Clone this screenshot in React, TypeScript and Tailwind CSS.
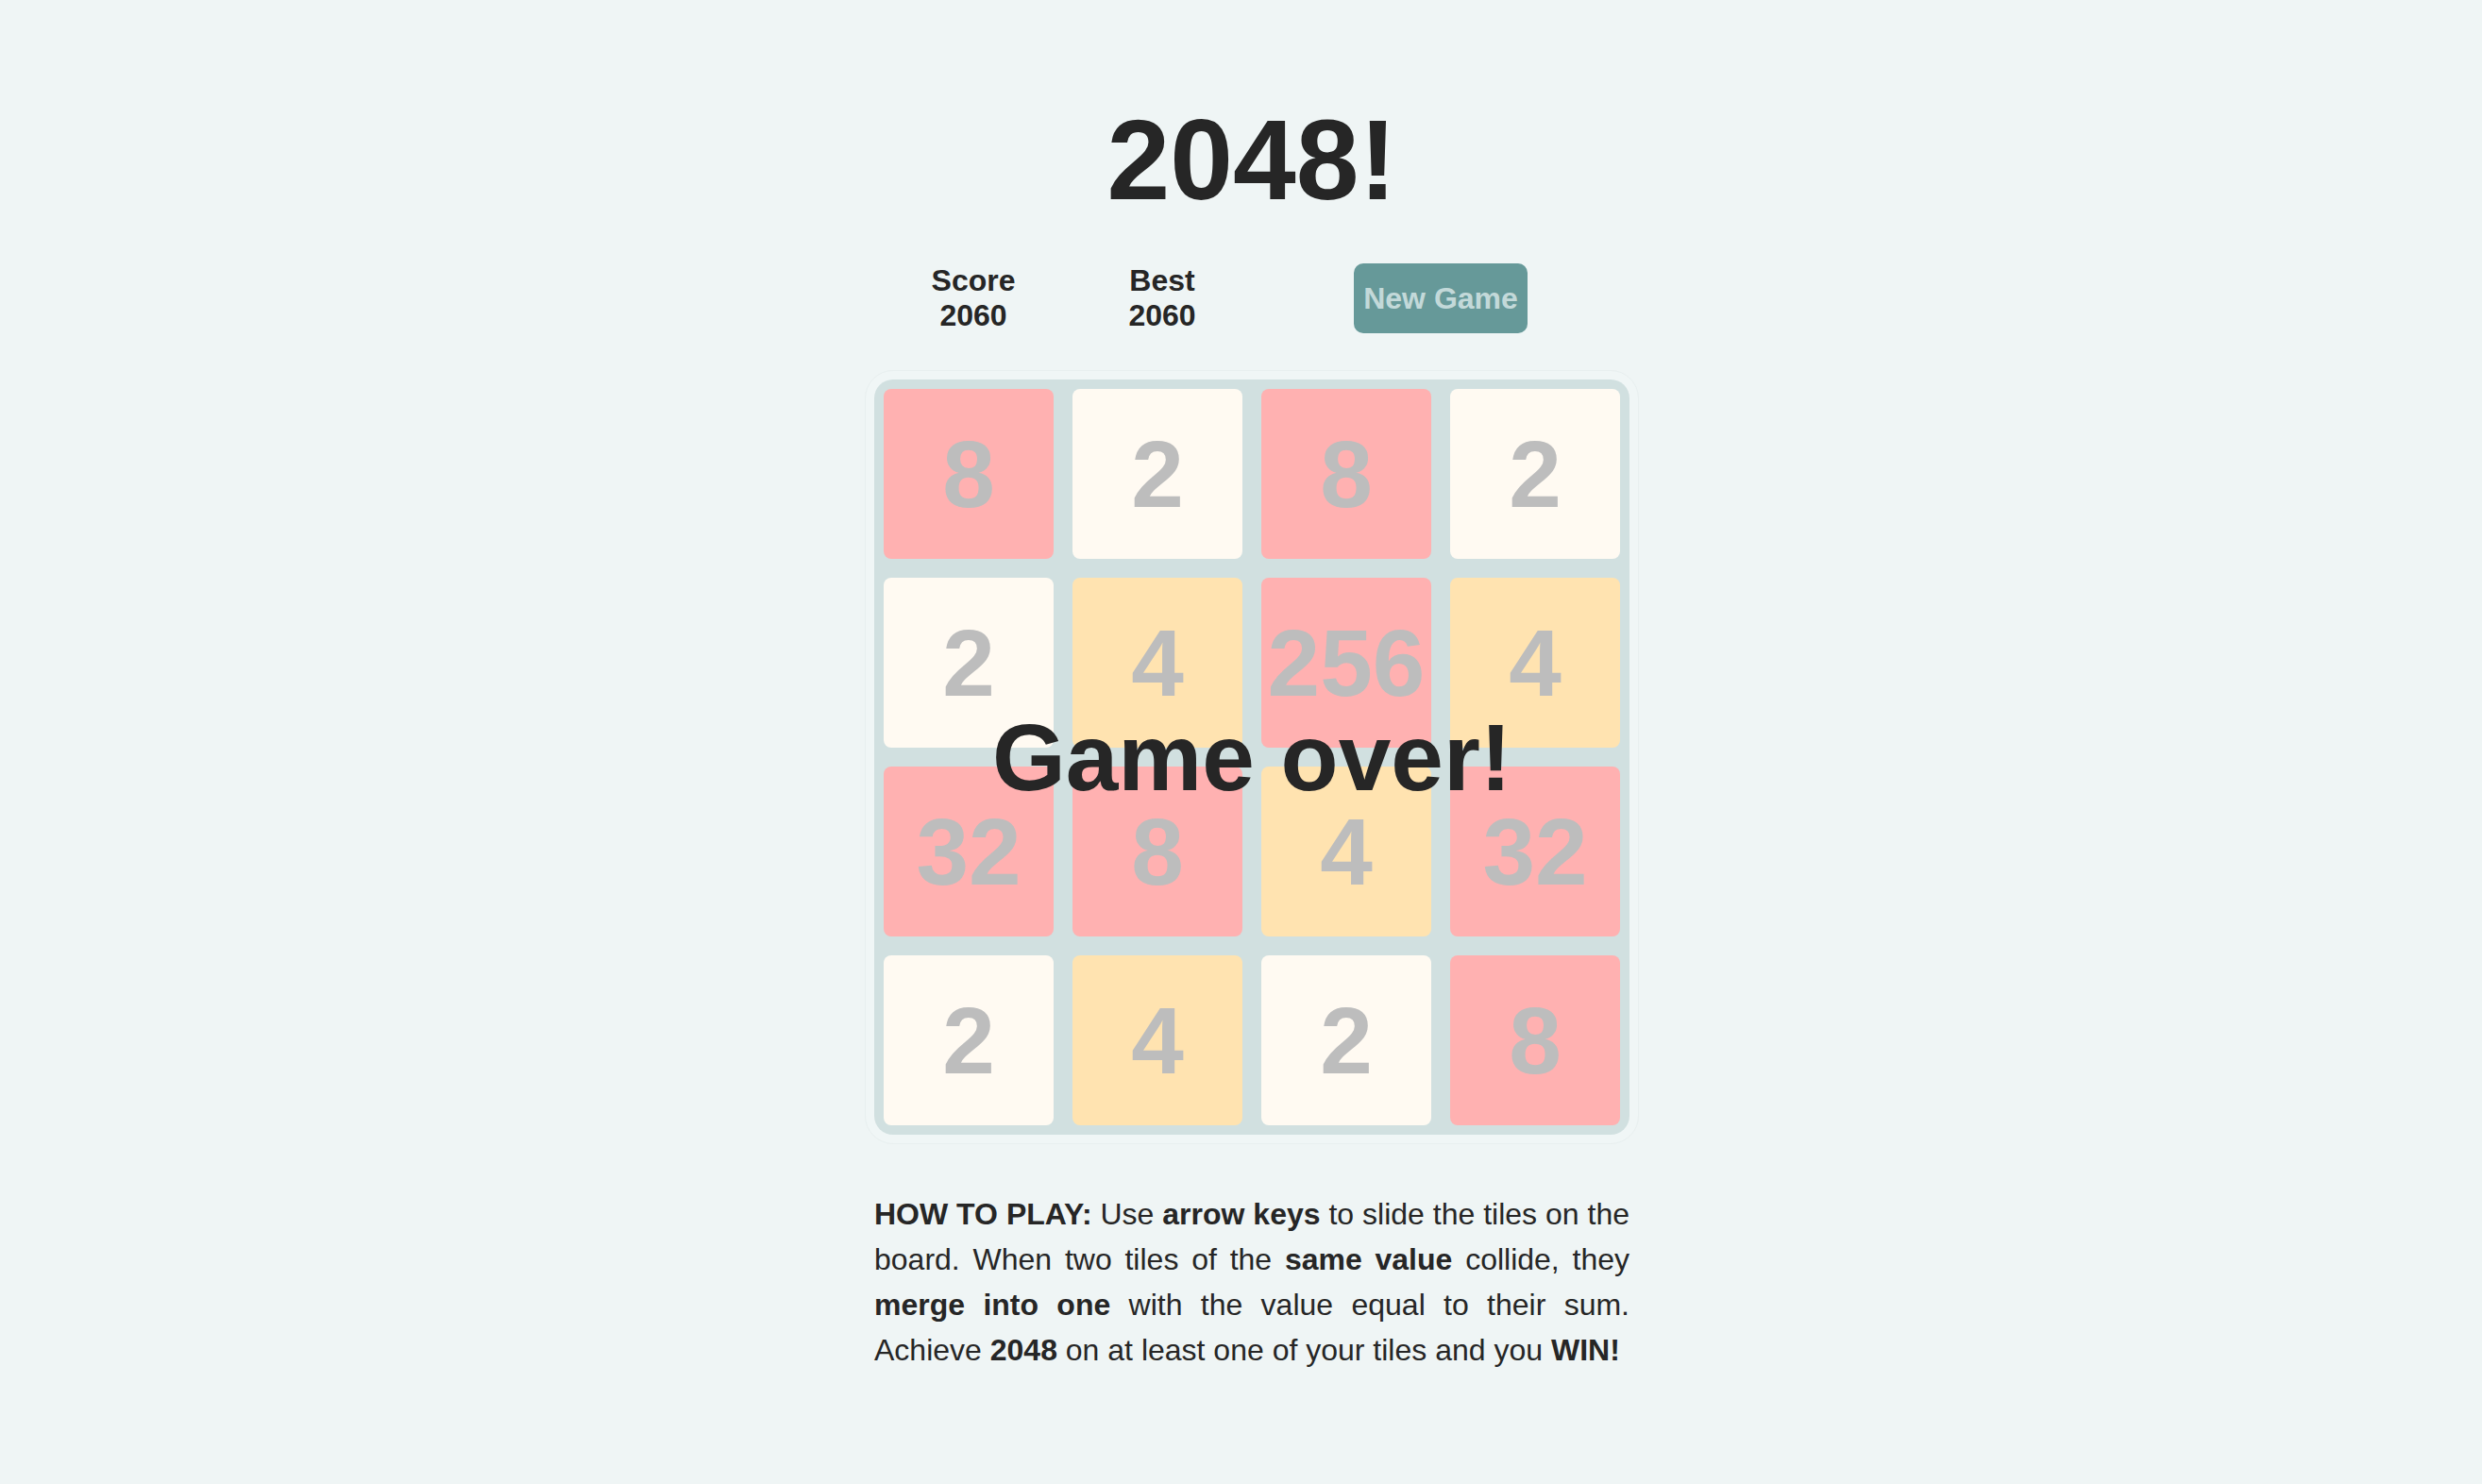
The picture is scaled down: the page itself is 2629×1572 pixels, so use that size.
import React from "react";

const board = [
  [8, 2, 8, 2],
  [2, 4, 256, 4],
  [32, 8, 4, 32],
  [2, 4, 2, 8],
];

function tileColor(v: number) {
  if (v === 2) return "bg-[#fffaf2]";
  if (v === 4) return "bg-[#ffe3b0]";
  return "bg-[#ffb1b1]";
}

export default function App() {
  return (
    <div className="min-h-screen bg-[#eff5f5] text-[#262626] font-['Liberation_Sans',Arial,sans-serif] flex justify-center pl-[23px]">
      <div className="w-[820px] flex flex-col items-center pt-[100px]">
        <h1 className="text-[120px] font-bold leading-[138px]">2048!</h1>

        <div className="w-full flex items-center mt-[40px] pl-[15px] h-[75px]">
          <div className="w-[200px] text-center text-[32px] font-bold leading-[37px]">
            <div>Score</div>
            <div>2060</div>
          </div>
          <div className="w-[200px] text-center text-[32px] font-bold leading-[37px]">
            <div>Best</div>
            <div>2060</div>
          </div>
          <button className="ml-[103px] w-[184px] h-[74px] rounded-[10px] bg-[#669999] text-[#c3d9d9] text-[32px] font-bold leading-none">
            New Game
          </button>
        </div>

        <div className="mt-[39px] rounded-[30px] border border-[#e8efef] bg-[#f0f6f6] p-[9px]">
          <div className="relative w-[800px] h-[800px] rounded-[20px] bg-[#d1e0e0] p-[10px] grid grid-cols-4 gap-[20px]">
            {board.flat().map((v, i) => (
              <div
                key={i}
                className={`${tileColor(v)} rounded-[8px] flex items-center justify-center text-[100px] font-bold text-[#bdbdbd] leading-none`}
              >
                {v}
              </div>
            ))}
            <div className="absolute inset-0 flex items-center justify-center">
              <span className="text-[100px] font-bold text-[#262626] leading-none">Game over!</span>
            </div>
          </div>
        </div>

        <p className="mt-[50px] w-[800px] text-[32px] leading-[48px] text-justify">
          <b>HOW TO PLAY:</b> Use <b>arrow keys</b> to slide the tiles on the board. When two tiles of the{" "}
          <b>same value</b> collide, they <b>merge into one</b> with the value equal to their sum. Achieve{" "}
          <b>2048</b> on at least one of your tiles and you <b>WIN!</b>
        </p>
      </div>
    </div>
  );
}
